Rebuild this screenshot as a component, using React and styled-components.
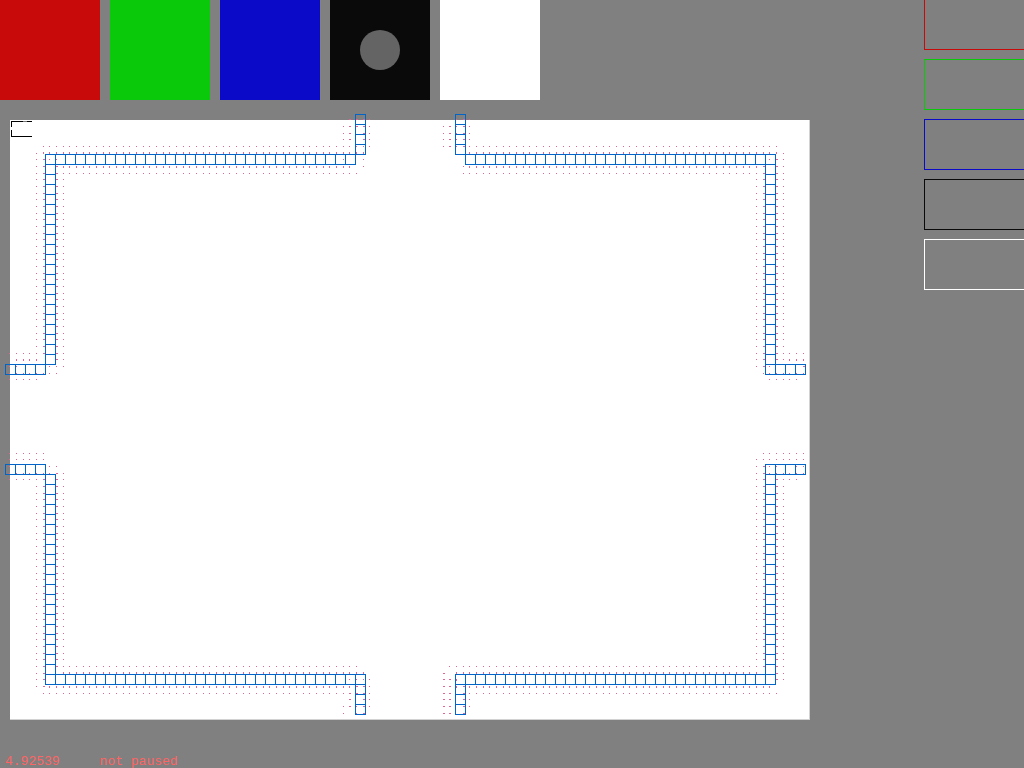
import React from "react";
import styled, { createGlobalStyle } from "styled-components";

const GlobalStyle = createGlobalStyle`
  * {
    box-sizing: border-box;
  }

  body {
    margin: 0;
    background: #808080;
    overflow-x: hidden;
  }
`;

const Page = styled.div`
  display: flex;
  flex-direction: column;
  min-height: 100vh;
`;

const Workspace = styled.main`
  flex: 1;
  display: grid;
  grid-template-columns: minmax(0, 1fr) 100px;
  column-gap: 114px;
`;

const Palette = styled.div`
  display: flex;
  gap: 10px;
`;

const Swatch = styled.button`
  display: grid;
  place-items: center;
  width: 100px;
  height: 100px;
  padding: 0;
  border: 0;
  background: ${({ $color }) => $color};
`;

const Brush = styled.span`
  width: 40px;
  height: 40px;
  border-radius: 50%;
  background: #646464;
`;

const Board = styled.section`
  margin: 20px 0 0 10px;
  background: #ffffff;
  box-shadow: inset -1px -1px 0 #d2d2d2;
`;

const Drawing = styled.svg`
  display: block;
  width: 100%;
  height: auto;
  overflow: visible;
  shape-rendering: crispEdges;
`;

const Slots = styled.aside`
  display: flex;
  flex-direction: column;
  gap: 9px;
  overflow: hidden;
`;

const Slot = styled.button`
  height: 51px;
  padding: 0;
  border: 1px solid ${({ $color }) => $color};
  border-right: 0;
  background: transparent;

  &:first-child {
    height: 50px;
    border-top: 0;
  }
`;

const Status = styled.footer`
  display: flex;
  gap: 40px;
  padding: 0 5px;
  font: 13px/12px "Liberation Mono", monospace;
  color: #ff6464;
`;

const colors = [
  { name: "Red", value: "#c80a0a" },
  { name: "Green", value: "#0ac80a" },
  { name: "Blue", value: "#0a0ac8" },
  { name: "Black", value: "#0a0a0a" },
  { name: "White", value: "#ffffff" },
];

// Wall runs: left, top, columns, rows of 10px cells.
const walls = [
  [345, -6, 1, 4],
  [35, 34, 31, 1],
  [35, 44, 1, 20],
  [-5, 244, 4, 1],
  [445, -6, 1, 4],
  [455, 34, 31, 1],
  [755, 44, 1, 20],
  [755, 244, 4, 1],
  [-5, 344, 4, 1],
  [35, 354, 1, 20],
  [35, 554, 32, 1],
  [345, 564, 1, 3],
  [755, 344, 4, 1],
  [755, 354, 1, 20],
  [445, 554, 32, 1],
  [445, 564, 1, 3],
];

// Sample points: first column, last column, first row, last row, mark width, mark height.
const samples = [
  // top left
  [51, 51, 2, 4, 1, 1],
  [52, 52, 1, 4, 2, 1],
  [53, 53, 1, 2, 2, 1],
  [54, 54, 1, 4, 2, 1],
  [55, 55, 1, 5, 1, 1],
  [6, 54, 5, 5, 1, 1],
  [6, 54, 6, 6, 1, 2],
  [51, 51, 7, 7, 1, 1],
  [54, 54, 7, 8, 1, 1],
  [7, 8, 7, 7, 1, 1],
  [9, 52, 8, 8, 1, 2],
  [9, 53, 9, 9, 1, 1],
  // top right
  [66, 66, 2, 5, 1, 1],
  [67, 67, 2, 5, 2, 1],
  [68, 68, 1, 5, 1, 1],
  [69, 69, 1, 5, 2, 1],
  [70, 70, 1, 4, 1, 1],
  [70, 116, 5, 5, 1, 1],
  [70, 116, 6, 6, 1, 2],
  [69, 69, 8, 8, 1, 1],
  [70, 113, 8, 8, 1, 2],
  [69, 113, 9, 9, 1, 1],
  [115, 115, 7, 7, 1, 1],
  // left side, above the opening
  [5, 5, 6, 36, 1, 1],
  [6, 6, 7, 36, 2, 1],
  [8, 8, 8, 37, 2, 1],
  [9, 9, 10, 38, 1, 1],
  [1, 4, 36, 36, 1, 1],
  [2, 5, 37, 37, 1, 2],
  [1, 2, 38, 38, 1, 1],
  [7, 8, 38, 39, 1, 1],
  [1, 6, 39, 39, 1, 1],
  [1, 5, 40, 40, 1, 1],
  // left side, below the opening
  [1, 6, 51, 51, 1, 1],
  [1, 6, 52, 52, 1, 1],
  [1, 1, 53, 53, 1, 1],
  [7, 8, 53, 53, 1, 1],
  [1, 7, 54, 54, 1, 1],
  [1, 4, 55, 55, 1, 1],
  [5, 5, 55, 86, 1, 1],
  [6, 6, 55, 86, 2, 1],
  [8, 8, 54, 83, 2, 1],
  [9, 9, 54, 83, 1, 1],
  // right side, above the opening
  [113, 113, 10, 38, 1, 1],
  [114, 114, 8, 38, 2, 1],
  [116, 116, 7, 37, 2, 1],
  [117, 117, 6, 37, 1, 1],
  [118, 120, 36, 36, 1, 1],
  [118, 120, 37, 37, 1, 2],
  [115, 115, 38, 38, 1, 1],
  [120, 120, 38, 38, 2, 1],
  [114, 120, 39, 39, 1, 1],
  [115, 119, 40, 40, 1, 1],
  // right side, below the opening
  [114, 120, 51, 51, 1, 1],
  [113, 120, 52, 52, 1, 1],
  [115, 116, 53, 53, 1, 1],
  [119, 120, 53, 53, 1, 1],
  [115, 120, 54, 54, 1, 1],
  [117, 119, 55, 55, 1, 1],
  [113, 113, 53, 83, 1, 1],
  [114, 114, 53, 83, 2, 1],
  [116, 116, 55, 85, 2, 1],
  [117, 117, 55, 85, 1, 1],
  // bottom left
  [10, 53, 83, 83, 1, 1],
  [9, 54, 84, 84, 1, 2],
  [52, 54, 85, 85, 1, 1],
  [7, 52, 86, 86, 1, 2],
  [6, 51, 87, 87, 1, 1],
  [52, 52, 87, 89, 2, 1],
  [51, 51, 89, 90, 1, 1],
  [53, 54, 86, 87, 2, 1],
  [54, 54, 88, 90, 2, 1],
  [53, 53, 89, 90, 1, 1],
  [55, 55, 85, 89, 1, 1],
  // bottom right
  [67, 112, 83, 83, 1, 1],
  [68, 113, 84, 84, 1, 2],
  [66, 66, 84, 90, 2, 1],
  [67, 67, 85, 90, 2, 1],
  [68, 68, 85, 86, 1, 2],
  [69, 69, 86, 90, 2, 1],
  [70, 115, 86, 86, 1, 2],
  [70, 116, 87, 87, 1, 1],
  [70, 70, 88, 89, 1, 1],
];

const range = (from, to) =>
  Array.from({ length: to - from + 1 }, (_, i) => from + i);

const columnX = (i) => Math.floor((20 * i + 9) / 3) - 10;
const rowY = (j) => Math.floor((20 * j + 339) / 3) - 120;

const wallPath = walls
  .flatMap(([x, y, columns, rows]) =>
    range(0, columns - 1).flatMap((c) =>
      range(0, rows - 1).map(
        (r) => `M${x + c * 10 + 0.5} ${y + r * 10 + 0.5}h10v10h-10z`
      )
    )
  )
  .join("");

const samplePath = samples
  .flatMap(([i0, i1, j0, j1, w, h]) =>
    range(i0, i1).flatMap((i) =>
      range(j0, j1).map(
        (j) =>
          `M${columnX(i)} ${rowY(j) - (j === 6 || j === 84 ? h - 1 : 0)}h${w}v${h}h-${w}z`
      )
    )
  )
  .join("");

function LevelMap() {
  return (
    <Drawing viewBox="0 0 800 600" role="img" aria-label="Level map">
      <path
        d="M1 1h7v1h-6v5h-1zM8 1h5v1h-5zM17 1h5v1h-5zM1 10h1v6h20v1h-21z"
        fill="#000000"
      />
      <path d="M13 1h4v1h-4z" fill="#787878" />
      <path d={wallPath} fill="none" stroke="#0064c8" />
      <path d={samplePath} fill="#e16496" />
    </Drawing>
  );
}

export default function App() {
  return (
    <>
      <GlobalStyle />
      <Page>
        <Workspace>
          <div>
            <Palette>
              {colors.map(({ name, value }) => (
                <Swatch key={name} $color={value} aria-label={name}>
                  {name === "Black" && <Brush />}
                </Swatch>
              ))}
            </Palette>
            <Board>
              <LevelMap />
            </Board>
          </div>
          <Slots>
            {colors.map(({ name, value }) => (
              <Slot key={name} $color={value} aria-label={`${name} slot`} />
            ))}
          </Slots>
        </Workspace>
        <Status>
          <span>4.92539</span>
          <span>not paused</span>
        </Status>
      </Page>
    </>
  );
}
